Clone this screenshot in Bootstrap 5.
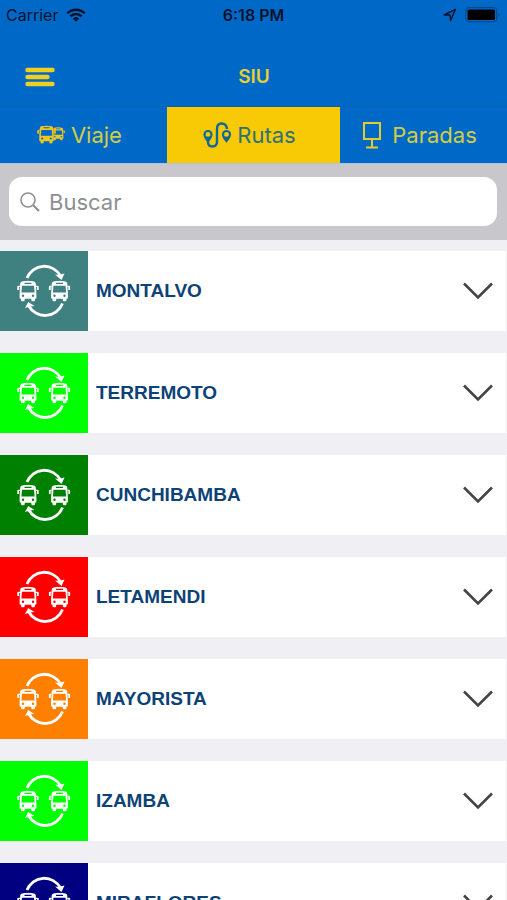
<!DOCTYPE html>
<html lang="es">
<head>
<meta charset="utf-8">
<meta name="viewport" content="width=device-width, initial-scale=1">
<title>SIU</title>
<link rel="stylesheet" href="https://cdn.jsdelivr.net/npm/bootstrap@5.3.0/dist/css/bootstrap.min.css">
<style>
:root { --siu-blue: #0069c8; --siu-yellow: #f8ca05; --siu-navy: #0d4277; }
body { font-family: Inter, "Liberation Sans", sans-serif; background: #efeff4; }
.siu-top { background: var(--siu-blue); }
.status { height: 30px; padding: 0 6px; color: #02132b; font-size: 16px; line-height: 30px; }
.status .time { font-weight: 600; }
.title-bar { height: 76px; padding: 18px 24px 0 25px; }
.title-bar h1 { font-size: 19px; font-weight: 600; line-height: 24px; color: #e4d02e; }
.side { flex: 1 1 0; }
.tabs { border-top: 1px solid #0862ac; border-bottom: 1px solid #a9c3e0; }
.tab-btn { flex: 1 1 0; height: 56px; border: 0; background: transparent; color: #d3cd3f; font-size: 22px; gap: 6px; padding: 0 8px 0 0; }
.tab-btn.active { background: var(--siu-yellow); color: #2e7176; flex-grow: 1.04; }
.tab-btn svg { flex: none; }
.search-bar { background: #c8c7cc; padding: 13px 10px 14px 9px; }
.search-box { background: #fff; border-radius: 13px; height: 49px; padding: 0 11px; gap: 9px; }
.search-box input { border: 0; outline: 0; background: transparent; font-size: 22px; line-height: 26px; color: #333; min-width: 0; padding: 0; }
.search-box input::placeholder { color: #8e8e93; opacity: 1; }
.routes { overflow-y: auto; scrollbar-width: none; padding-top: 11px; }
.routes::-webkit-scrollbar { display: none; }
.route { display: flex; align-items: center; width: 100%; height: 80px; margin-bottom: 22px; padding: 0 13px 0 0; border: 0; border-right: 1px solid #f2f2f6; background: #fff; color: var(--siu-navy); text-align: left; font: bold 19px/24px "Liberation Sans", Arial, sans-serif; }
.route-icon { width: 88px; height: 80px; margin-right: 8px; }
.c-teal { background: #3f8080; } .c-lime { background: #00ff00; } .c-green { background: #008000; }
.c-red { background: #ff0000; } .c-orange { background: #ff8000; } .c-navy { background: #000080; }
</style>
<script src="https://cdn.jsdelivr.net/npm/bootstrap@5.3.0/dist/js/bootstrap.bundle.min.js"></script>
</head>
<body>
<svg class="d-none" aria-hidden="true">
  <symbol id="bus" viewBox="0 0 22 21">
    <path fill="currentColor" fill-rule="evenodd" d="M5 1Q11-.4 17 1Q18.600 1.400 18.800 3L19.400 13.500V17.500Q19.400 18.300 18 18.300V19.500Q18 21 16.200 21Q14.300 21 14.300 19.500V18.300H7.700V19.500Q7.700 21 5.800 21Q4 21 4 19.500V18.300Q2.600 18.300 2.600 17.500V13.500L3.200 3Q3.400 1.400 5 1ZM7.500 2.200V3.400H14.500V2.200ZM5 5.200L4.400 12H17.600L17 5.200ZM6 14A1.200 1.200 0 1 0 6 16.400A1.200 1.200 0 1 0 6 14ZM16 14A1.200 1.200 0 1 0 16 16.400A1.200 1.200 0 1 0 16 14Z"/>
    <path fill="currentColor" d="M.3 6Q.3 5.200 1.500 5.200H3V6.500H2.200V9.500H.3ZM21.700 6Q21.700 5.200 20.500 5.200H19V6.500H19.800V9.500H21.700Z"/>
  </symbol>
  <symbol id="loop" viewBox="0 0 88 80">
    <path fill="none" stroke="#fff" stroke-width="2.800" d="M27 27A18.500 18.500 0 0 1 60.500 25M62.500 52.500A18.700 18.700 0 0 1 28.500 54.500"/>
    <path fill="#fff" d="M55 23.500L58.500 24L64.500 22.500L61.500 29ZM25 57L28.200 51L34.500 55L30 55.500Z"/>
    <use href="#bus" x="17" y="29.500" width="22" height="21" color="#fff"/>
    <use href="#bus" x="48.500" y="29.500" width="22" height="21" color="#fff"/>
  </symbol>
  <symbol id="chevron" viewBox="0 0 30 18">
    <path d="M1 1.500L15 15.500L29 1.500" fill="none" stroke="#444" stroke-width="2.600"/>
  </symbol>
</svg>
<div class="d-flex flex-column vh-100 overflow-hidden">
  <header class="siu-top">
    <div class="status d-flex align-items-center">
      <div class="side d-flex align-items-center gap-2">
        <span>Carrier</span>
        <svg width="20" height="14" viewBox="0 0 20 14" aria-label="Wi-Fi"><path fill="none" stroke="currentColor" stroke-width="2.500" d="M1.300 5.300A12.500 12.500 0 0 1 18.700 5.300M4.400 8.400A8 8 0 0 1 15.600 8.400"/><path fill="currentColor" d="M6.700 10.500A4.800 4.800 0 0 1 13.300 10.500L10 13.800Z"/></svg>
      </div>
      <span class="time">6:18 PM</span>
      <div class="side d-flex align-items-center justify-content-end gap-2">
        <svg width="14" height="14" viewBox="0 0 14 14" aria-label="Ubicación"><path d="M1.200 7L12.400 1.400L7.600 12.500L7 7Z" fill="none" stroke="currentColor" stroke-width="1.500" stroke-linejoin="round"/></svg>
        <svg width="36" height="16" viewBox="0 0 36 16" aria-label="Batería"><rect x=".7" y=".7" width="31" height="14" rx="3.500" fill="none" stroke="#064a8e" stroke-width="1.200"/><rect x="2.500" y="2.500" width="27.500" height="10.500" rx="1.500" fill="#000"/><path d="M33.500 5.500Q35.500 7.700 33.500 10Z" fill="#064a8e"/></svg>
      </div>
    </div>
    <div class="title-bar d-flex align-items-center">
      <div class="side">
        <button type="button" class="btn p-0 border-0 d-block" aria-label="Menú">
          <svg class="d-block" width="30" height="20" viewBox="0 0 30 20"><path d="M2.500 3H27.500M2.500 10H22.500M2.500 17H27.500" stroke="#f0d01c" stroke-width="4.400" stroke-linecap="round"/></svg>
        </button>
      </div>
      <h1 class="m-0">SIU</h1>
      <div class="side"></div>
    </div>
    <nav class="tabs d-flex" aria-label="Secciones">
      <button type="button" class="tab-btn d-flex align-items-center justify-content-center">
        <svg width="28" height="20" viewBox="0 0 28 20" color="#f0c81c"><use href="#bus" x="14" y="2" width="14" height="13.500"/><rect x="14" y="1" width="2.500" height="15" fill="#0069c8"/><use href="#bus" x="0" y="0" width="19" height="19"/></svg>
        <span>Viaje</span>
      </button>
      <button type="button" class="tab-btn active d-flex align-items-center justify-content-center" aria-current="page">
        <svg width="28" height="28" viewBox="0 0 28 28" fill="none" stroke="#0f6896"><path stroke-width="2.400" d="M5 19V21Q5 25.500 9.500 25.500Q14 25.500 14 20.500V8Q14 2.500 18.500 2.500Q23.500 2.500 24 8"/><path stroke-width="2.200" d="M5 20Q1.500 16 1.500 13.500A3.500 3.500 0 0 1 8.500 13.500Q8.500 16 5 20ZM23.500 20Q20 16 20 13.500A3.500 3.500 0 0 1 27 13.500Q27 16 23.500 20Z"/><path fill="#0f6896" stroke="none" d="M2.300 15.500H7.700L5 20ZM20.500 15.500H26.500L23.500 20.500Z"/></svg>
        <span>Rutas</span>
      </button>
      <button type="button" class="tab-btn d-flex align-items-center justify-content-center">
        <svg class="me-1" width="20" height="28" viewBox="0 0 20 28" fill="none" stroke="#e2cc2b" stroke-width="2"><path d="M2 2H18V18H2ZM10 18V26M4 26.500H16"/></svg>
        <span>Paradas</span>
      </button>
    </nav>
  </header>
  <div class="search-bar">
    <label class="search-box d-flex align-items-center">
      <svg width="20" height="20" viewBox="0 0 20 20" fill="none" stroke="#8e8e93" stroke-width="1.600" aria-hidden="true"><circle cx="8" cy="8" r="7"/><path stroke-width="2.200" d="M13 13L19 19"/></svg>
      <input class="flex-grow-1" type="search" placeholder="Buscar" aria-label="Buscar">
    </label>
  </div>
  <main class="routes flex-grow-1">
    <button type="button" class="route"><svg class="route-icon c-teal"><use href="#loop"/></svg><span class="flex-grow-1">MONTALVO</span><svg width="30" height="18"><use href="#chevron"/></svg></button>
    <button type="button" class="route"><svg class="route-icon c-lime"><use href="#loop"/></svg><span class="flex-grow-1">TERREMOTO</span><svg width="30" height="18"><use href="#chevron"/></svg></button>
    <button type="button" class="route"><svg class="route-icon c-green"><use href="#loop"/></svg><span class="flex-grow-1">CUNCHIBAMBA</span><svg width="30" height="18"><use href="#chevron"/></svg></button>
    <button type="button" class="route"><svg class="route-icon c-red"><use href="#loop"/></svg><span class="flex-grow-1">LETAMENDI</span><svg width="30" height="18"><use href="#chevron"/></svg></button>
    <button type="button" class="route"><svg class="route-icon c-orange"><use href="#loop"/></svg><span class="flex-grow-1">MAYORISTA</span><svg width="30" height="18"><use href="#chevron"/></svg></button>
    <button type="button" class="route"><svg class="route-icon c-lime"><use href="#loop"/></svg><span class="flex-grow-1">IZAMBA</span><svg width="30" height="18"><use href="#chevron"/></svg></button>
    <button type="button" class="route"><svg class="route-icon c-navy"><use href="#loop"/></svg><span class="flex-grow-1">MIRAFLORES</span><svg width="30" height="18"><use href="#chevron"/></svg></button>
  </main>
</div>
</body>
</html>
